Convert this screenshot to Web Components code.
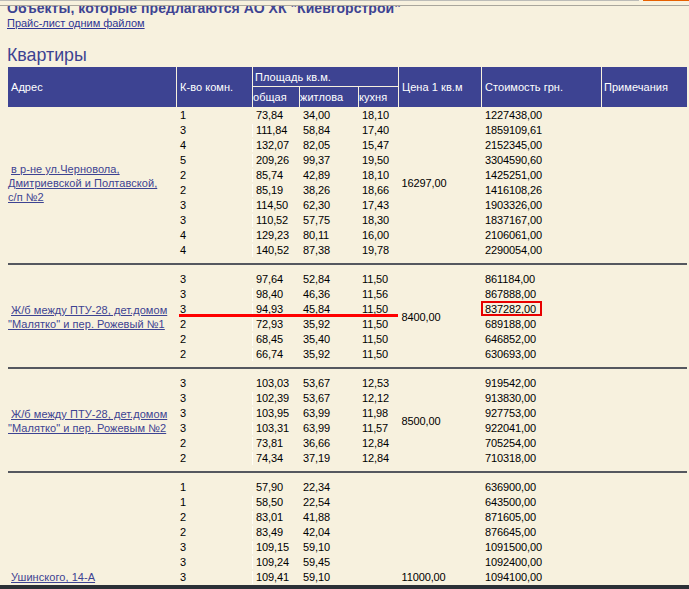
<!DOCTYPE html>
<html lang="ru">
<head>
<meta charset="utf-8">
<title>Квартиры</title>
<style>
html,body{margin:0;padding:0;height:589px;overflow:hidden;background:#f7f1de}
body{font:11px "Liberation Sans",Arial,sans-serif;color:#000}
</style>
</head>
<body>
<price-page>
  <span slot="title">Объекты, которые предлагаются АО ХК "Киевгорстрой"</span>
  <a slot="pricelink" href="#">Прайс-лист одним файлом</a>
  <span slot="heading">Квартиры</span>

  <flat-head></flat-head>

  <flat-group price="16297,00">
    <flat-link slot="address">в р-не ул.Черновола,<br>Дмитриевской и Полтавской,<br>с/п №2</flat-link>
    <flat-row first d="1|73,84|34,00|18,10|1227438,00"></flat-row>
    <flat-row d="3|111,84|58,84|17,40|1859109,61"></flat-row>
    <flat-row d="4|132,07|82,05|15,47|2152345,00"></flat-row>
    <flat-row d="5|209,26|99,37|19,50|3304590,60"></flat-row>
    <flat-row d="2|85,74|42,89|18,10|1425251,00"></flat-row>
    <flat-row d="2|85,19|38,26|18,66|1416108,26"></flat-row>
    <flat-row d="3|114,50|62,30|17,43|1903326,00"></flat-row>
    <flat-row d="3|110,52|57,75|18,30|1837167,00"></flat-row>
    <flat-row d="4|129,23|80,11|16,00|2106061,00"></flat-row>
    <flat-row d="4|140,52|87,38|19,78|2290054,00"></flat-row>
  </flat-group>

  <flat-group price="8400,00">
    <flat-link slot="address">Ж/б между ПТУ-28, дет.домом<br>"Малятко" и пер. Рожевый №1</flat-link>
    <flat-row first d="3|97,64|52,84|11,50|861184,00"></flat-row>
    <flat-row d="3|98,40|46,36|11,56|867888,00"></flat-row>
    <flat-row mark d="3|94,93|45,84|11,50|837282,00"></flat-row>
    <flat-row d="2|72,93|35,92|11,50|689188,00"></flat-row>
    <flat-row d="2|68,45|35,40|11,50|646852,00"></flat-row>
    <flat-row d="2|66,74|35,92|11,50|630693,00"></flat-row>
  </flat-group>

  <flat-group price="8500,00">
    <flat-link slot="address">Ж/б между ПТУ-28, дет.домом<br>"Малятко" и пер. Рожевым №2</flat-link>
    <flat-row first d="3|103,03|53,67|12,53|919542,00"></flat-row>
    <flat-row d="3|102,39|53,67|12,12|913830,00"></flat-row>
    <flat-row d="3|103,95|63,99|11,98|927753,00"></flat-row>
    <flat-row d="3|103,31|63,99|11,57|922041,00"></flat-row>
    <flat-row d="2|73,81|36,66|12,84|705254,00"></flat-row>
    <flat-row d="2|74,34|37,19|12,84|710318,00"></flat-row>
  </flat-group>

  <flat-group price="11000,00" end last>
    <flat-link slot="address">Ушинского, 14-А</flat-link>
    <flat-row first d="1|57,90|22,34||636900,00"></flat-row>
    <flat-row d="1|58,50|22,54||643500,00"></flat-row>
    <flat-row d="2|83,01|41,88||871605,00"></flat-row>
    <flat-row d="2|83,49|42,04||876645,00"></flat-row>
    <flat-row d="3|109,15|59,10||1091500,00"></flat-row>
    <flat-row d="3|109,24|59,45||1092400,00"></flat-row>
    <flat-row d="3|109,41|59,10||1094100,00"></flat-row>
  </flat-group>
</price-page>

<script>
const COLS = '168px 75px 46px 58px 39px 82px 119px 85px';

class PricePage extends HTMLElement {
  constructor(){
    super();
    this.attachShadow({mode:'open'}).innerHTML = `
    <style>
      :host{display:block;height:589px;overflow:hidden;position:relative;background:#f7f1de;
        font:11px "Liberation Sans",Arial,sans-serif}
      .chrome{height:5px;display:flex;gap:4px;border-bottom:1px solid #a9a69c;background:#f7f1de}
      .chrome i{display:block;height:1px}
      .chrome .a{flex:1;background:#bcbcb8}
      .chrome .b{width:46px;background:#e66000}
      .title{height:9px;overflow:hidden;padding-left:7px;color:#3d4392;font-weight:bold;font-size:14px;line-height:5px;
        letter-spacing:.04px;white-space:nowrap}
      .title span{display:block}
      .link{padding:2px 0 0 7px;height:13px;line-height:13px;font-size:11px;letter-spacing:-.03px}
      ::slotted(a){color:#2f3594}
      .heading{padding:15px 0 0 7px;height:22px;line-height:21px;font-size:17.8px;color:#3d4392}
      .table{padding:0 2px 0 8px}
      .foot{position:absolute;left:0;right:0;top:585px;height:4px;background:#2b3036}
    </style>
    <div class="chrome"><i class="a"></i><i class="b"></i></div>
    <div class="title"><span><slot name="title"></slot></span></div>
    <div class="link"><slot name="pricelink"></slot></div>
    <div class="heading"><slot name="heading"></slot></div>
    <div class="table"><slot></slot></div>
    <div class="foot"></div>`;
  }
}

class FlatHead extends HTMLElement {
  constructor(){
    super();
    this.attachShadow({mode:'open'}).innerHTML = `
    <style>
      :host{display:grid;grid-template-columns:${COLS};column-gap:1px;grid-template-rows:19px 20px;row-gap:1px;
        color:#fff;font-size:11px;height:40px;letter-spacing:.05px;width:679px}
      div{background:#3d4392;display:flex;align-items:center;padding-left:3px;white-space:nowrap;overflow:hidden;min-width:0}
      .tall{grid-row:1/3}
      .span{grid-column:3/6;grid-row:1;padding-left:2px}
      .sub{padding-left:0;grid-row:2}
      .notes{padding-left:2px}
    </style>
    <div class="tall" style="grid-column:1">Адрес</div>
    <div class="tall" style="grid-column:2">К-во комн.</div>
    <div class="span">Площадь кв.м.</div>
    <div class="tall" style="grid-column:6">Цена 1 кв.м</div>
    <div class="tall" style="grid-column:7">Стоимость грн.</div>
    <div class="tall notes" style="grid-column:8">Примечания</div>
    <div class="sub" style="grid-column:3">общая</div>
    <div class="sub" style="grid-column:4">житлова</div>
    <div class="sub" style="grid-column:5">кухня</div>`;
  }
}

class FlatGroup extends HTMLElement {
  constructor(){
    super();
    const end = this.hasAttribute('end');
    const last = this.hasAttribute('last');
    this.attachShadow({mode:'open'}).innerHTML = `
    <style>
      :host{display:block;width:679px;padding-top:1px}
      .g{display:grid;grid-template-columns:169px 222px 83px 205px}
      .addr{grid-column:1;grid-row:1;align-self:${end?'end':'center'};font-size:11px;line-height:14px;${end?'height:15px;':''}}
      .rows{grid-column:2/5;grid-row:1}
      .price{grid-column:3;grid-row:1;align-self:${end?'end':'center'};padding-left:2.5px;line-height:15px;letter-spacing:-.12px}
      hr{border:0;height:2px;background:#55585f;margin:5px 0 6px;${last?'display:none;':''}}
    </style>
    <div class="g">
      <div class="addr"><slot name="address"></slot></div>
      <div class="rows"><slot></slot></div>
      <div class="price"></div>
    </div>
    <hr>`;
    this.shadowRoot.querySelector('.price').textContent = this.getAttribute('price');
  }
}

class FlatRow extends HTMLElement {
  constructor(){
    super();
    const [r,a,b,c,p] = this.getAttribute('d').split('|');
    const first = this.hasAttribute('first');
    const mark = this.hasAttribute('mark');
    this.attachShadow({mode:'open'}).innerHTML = `
    <style>
      :host{display:block;height:15px;position:relative;line-height:15px;font-size:11px;letter-spacing:-.12px;color:#000}
      .r{display:grid;grid-template-columns:76px 47px 59px 40px 83px 120px;height:15px}
      .r>div{padding-left:3px;white-space:nowrap;min-width:0}
      .tick{position:absolute;left:75px;top:1px;height:13px;width:1px;background:#fffdf6;${first?'display:none;':''}}
      .line{position:absolute;left:2px;top:12px;width:219px;height:3px;background:#f00}
      .box{position:absolute;left:304px;top:-1px;width:61px;height:15px;border:2.5px solid #e80000;box-sizing:border-box}
    </style>
    <div class="r">
      <div>${r}</div><div>${a}</div><div>${b}</div><div>${c}</div><div></div><div>${p}</div>
    </div>
    <span class="tick"></span>
    ${mark?'<span class="line"></span><span class="box"></span>':''}`;
  }
}

class FlatLink extends HTMLElement {
  constructor(){
    super();
    this.attachShadow({mode:'open'}).innerHTML = `
    <style>
      :host{display:block;white-space:nowrap;letter-spacing:.05px}
      a{color:#3d4392;display:block}
      .lead{display:inline-block;width:3px}
    </style>
    <a href="#"><span class="lead"></span><slot></slot></a>`;
  }
}

customElements.define('price-page', PricePage);
customElements.define('flat-head', FlatHead);
customElements.define('flat-group', FlatGroup);
customElements.define('flat-row', FlatRow);
customElements.define('flat-link', FlatLink);
</script>
</body>
</html>
